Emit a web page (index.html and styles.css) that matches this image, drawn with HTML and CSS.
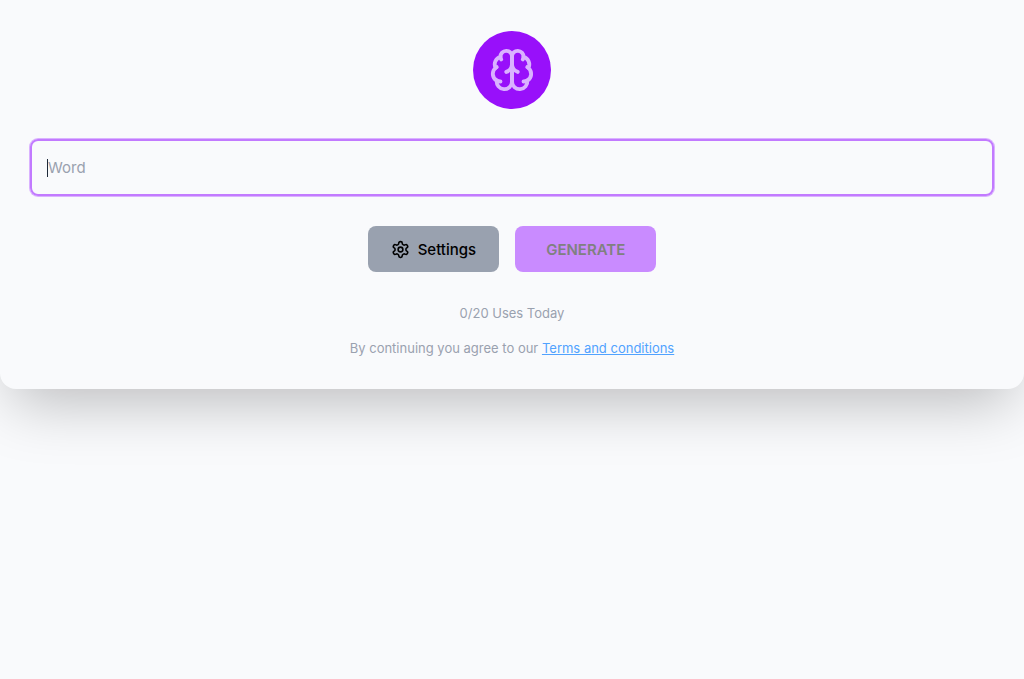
FILE: index.html
```html
<!DOCTYPE html>
<html lang="en">
<head>
  <meta charset="UTF-8">
  <meta name="viewport" content="width=device-width, initial-scale=1.0">

  <title>Word Generator</title>

  <link rel="stylesheet" href="styles.css">
</head>
<body>

  <main class="card">
    <div class="logo">
      <svg class="logo-icon" viewBox="0 0 24 24" aria-hidden="true">
        <path d="M12 5a3 3 0 1 0-5.997.125 4 4 0 0 0-2.526 5.77 4 4 0 0 0 .556 6.588A4 4 0 1 0 12 18Z"/>
        <path d="M12 5a3 3 0 1 1 5.997.125 4 4 0 0 1 2.526 5.77 4 4 0 0 1-.556 6.588A4 4 0 1 1 12 18Z"/>
        <path d="M15 13a4.5 4.5 0 0 1-3-4 4.5 4.5 0 0 1-3 4"/>
        <path d="M17.599 6.5a3 3 0 0 0 .399-1.375"/>
        <path d="M6.003 5.125A3 3 0 0 0 6.401 6.5"/>
        <path d="M3.477 10.896a4 4 0 0 1 .585-.396"/>
        <path d="M19.938 10.5a4 4 0 0 1 .585.396"/>
        <path d="M6 18a4 4 0 0 1-1.967-.516"/>
        <path d="M19.967 17.484A4 4 0 0 1 18 18"/>
      </svg>
    </div>

    <form class="word-form">
      <div class="field">
        <input type="text" name="word" class="word-input" placeholder="Word" aria-label="Word" autocomplete="off">
        <span class="caret"></span>
      </div>

      <div class="buttons">
        <button type="button" class="btn btn-settings">
          <svg class="btn-icon" viewBox="0 0 24 24" aria-hidden="true">
            <path d="M12.22 2h-.44a2 2 0 0 0-2 2v.18a2 2 0 0 1-1 1.73l-.43.25a2 2 0 0 1-2 0l-.15-.08a2 2 0 0 0-2.73.73l-.22.38a2 2 0 0 0 .73 2.73l.15.1a2 2 0 0 1 1 1.72v.51a2 2 0 0 1-1 1.74l-.15.09a2 2 0 0 0-.73 2.73l.22.38a2 2 0 0 0 2.73.73l.15-.08a2 2 0 0 1 2 0l.43.25a2 2 0 0 1 1 1.73V20a2 2 0 0 0 2 2h.44a2 2 0 0 0 2-2v-.18a2 2 0 0 1 1-1.73l.43-.25a2 2 0 0 1 2 0l.15.08a2 2 0 0 0 2.73-.73l.22-.39a2 2 0 0 0-.73-2.73l-.15-.08a2 2 0 0 1-1-1.74v-.5a2 2 0 0 1 1-1.74l.15-.09a2 2 0 0 0 .73-2.73l-.22-.38a2 2 0 0 0-2.73-.73l-.15.08a2 2 0 0 1-2 0l-.43-.25a2 2 0 0 1-1-1.73V4a2 2 0 0 0-2-2z"/>
            <circle cx="12" cy="12" r="3"/>
          </svg>
          Settings
        </button>
        <button type="submit" class="btn btn-generate" disabled>GENERATE</button>
      </div>
    </form>

    <p class="note">0/20 Uses Today</p>
    <p class="note">By continuing you agree to our <a href="#" class="terms">Terms and conditions</a></p>
  </main>

</body>
</html>
```
FILE: styles.css
```css
* {
  box-sizing: border-box;
}
body {
  min-height: 100vh;
  margin: 0;
  background-color: #f9fafc;
  font-family: Inter, "Liberation Sans", sans-serif;
  font-size: 15px;
  line-height: 24px;
}
.card {
  display: flex;
  flex-direction: column;
  align-items: center;
  padding: 31px 30px;
  background-color: #f9fafc;
  border-radius: 0 0 16px 16px;
  box-shadow: 0 25px 60px -12px rgba(0, 0, 0, 0.25);
}
.logo {
  display: flex;
  padding: 16px;
  background-color: #9810fa;
  border-radius: 50%;
}
.logo-icon {
  width: 46px;
  height: 46px;
  fill: none;
  stroke: #dab2ff;
  stroke-width: 2;
  stroke-linecap: round;
  stroke-linejoin: round;
}
.word-form {
  width: 100%;
  margin: 30px 0 31px;
}
.field {
  position: relative;
}
.word-input {
  display: block;
  width: 100%;
  height: 57px;
  padding: 0 16px;
  border: 2px solid #c27aff;
  border-radius: 8px;
  outline: none;
  background-color: transparent;
  box-shadow: 0 0 0 1px #dab2ff;
  font: inherit;
  color: #1e2939;
}
.word-input::placeholder {
  color: #99a1af;
  opacity: 1;
}
/* text cursor at the start of the empty field */
.caret {
  position: absolute;
  top: 20px;
  left: 17px;
  width: 1px;
  height: 18px;
  background-color: #1e2939;
}
.buttons {
  display: flex;
  justify-content: center;
  gap: 16px;
  margin-top: 30px;
}
.btn {
  display: flex;
  align-items: center;
  gap: 8px;
  height: 46px;
  padding: 1px 23px 0;
  border: 0;
  border-radius: 8px;
  font: inherit;
  font-weight: 500;
}
.btn-settings {
  background-color: #99a1af;
  color: #000;
}
.btn-generate {
  padding: 1px 31px 0;
  background-color: #c98bff;
  color: #808080;
  font-weight: 600;
}
.btn-icon {
  width: 19px;
  height: 19px;
  fill: none;
  stroke: currentColor;
  stroke-width: 2;
  stroke-linecap: round;
  stroke-linejoin: round;
}
.note {
  margin: 0 0 15px;
  font-size: 13px;
  line-height: 20px;
  color: #99a1af;
}
.note:last-child {
  margin-bottom: 0;
}
.terms {
  color: #51a2ff;
  text-decoration: underline;
}
```
